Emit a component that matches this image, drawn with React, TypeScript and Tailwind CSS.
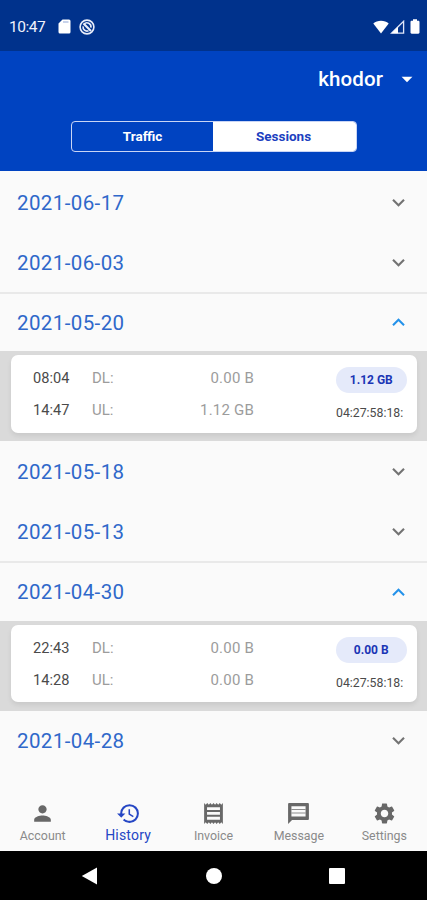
import { useState } from 'react';
import {
  MdArrowDropDown,
  MdHistory,
  MdKeyboardArrowDown,
  MdKeyboardArrowUp,
  MdPerson,
  MdSettings,
} from 'react-icons/md';

interface Session {
  start: string;
  end: string;
  download: string;
  upload: string;
  total: string;
  mac: string;
}

interface Day {
  date: string;
  session?: Session;
}

interface IconProps {
  size: number;
  className?: string;
}

const days: Day[] = [
  { date: '2021-06-17' },
  { date: '2021-06-03' },
  {
    date: '2021-05-20',
    session: { start: '08:04', end: '14:47', download: '0.00 B', upload: '1.12 GB', total: '1.12 GB', mac: '04:27:58:18:' },
  },
  { date: '2021-05-18' },
  { date: '2021-05-13' },
  {
    date: '2021-04-30',
    session: { start: '22:43', end: '14:28', download: '0.00 B', upload: '0.00 B', total: '0.00 B', mac: '04:27:58:18:' },
  },
  { date: '2021-04-28' },
];

// Speech bubble with a thick frame and two thin bars inside
function MessageIcon({ size, className }: IconProps) {
  return (
    <svg width={size} height={size} viewBox="0 0 24 24" fill="currentColor" className={className}>
      <path
        fillRule="evenodd"
        d="M3.200 1.800H20.800C21.500 1.800 22 2.300 22 3V17c0 .7-.5 1.200-1.200 1.200H5.800L2 22V3c0-.7.500-1.200 1.200-1.200zM5.200 5v9.800h13.600V5z"
      />
      <path d="M5.200 7.700h13.600v1H5.200zM5.200 11.100h13.600v1H5.200z" opacity="0.75" />
    </svg>
  );
}

// Paper slip with serrated top and bottom edges
function InvoiceIcon({ size, className }: IconProps) {
  return (
    <svg width={size} height={size} viewBox="0 0 24 24" fill="currentColor" className={className}>
      <path
        fillRule="evenodd"
        d="M3 22l1.500-1.500L6 22l1.500-1.500L9 22l1.500-1.500L12 22l1.500-1.500L15 22l1.500-1.500L18 22l1.500-1.500L21 22V2l-1.500 1.500L18 2l-1.500 1.500L15 2l-1.500 1.500L12 2l-1.500 1.500L9 2 7.500 3.500 6 2 4.500 3.500 3 2zM5.800 6v2.700h12.400V6zM5.800 10.600v2.700h12.400v-2.700zM5.800 15.200v2.700h12.400v-2.700z"
      />
    </svg>
  );
}

const navItems = [
  { label: 'Account', icon: MdPerson },
  { label: 'History', icon: MdHistory },
  { label: 'Invoice', icon: InvoiceIcon },
  { label: 'Message', icon: MessageIcon },
  { label: 'Settings', icon: MdSettings },
];

function StatusBar() {
  return (
    <div className="flex h-[51px] shrink-0 items-center bg-[#00328c] pl-[9px] pr-[7px] pt-[2px] text-white">
      <span className="w-[49px] pt-[2px] text-[15.500px] leading-none tracking-[-0.500px] text-[#f0f3fc]">10:47</span>
      <svg width="13" height="15" viewBox="0 0 13 15" className="mr-[8px]">
        <path d="M4.5 0.5H11a1.5 1.5 0 0 1 1.5 1.5v11a1.5 1.5 0 0 1-1.5 1.5H2A1.5 1.5 0 0 1 .5 13V4.5z" fill="#fff" />
        <path d="M5 3h5.500" stroke="#8fa5d6" strokeWidth="1" />
      </svg>
      <svg width="16" height="16" viewBox="0 0 16 16" fill="none" stroke="#e8edfa">
        <circle cx="8" cy="8" r="6.900" strokeWidth="1.600" />
        <path d="M5 5.200A4 4 0 0 1 11.900 8.600M4.100 7.400A4 4 0 0 0 9.500 11.800" strokeWidth="1.600" />
        <path d="M4.500 4.500l7.500 7.500" strokeWidth="2.200" />
      </svg>
      <svg width="16" height="14" viewBox="0 0 16 14" className="ml-auto">
        <path d="M8 13.500L0.300 3.600C2.300 1.800 5 .8 8 .8s5.700 1 7.700 2.800z" fill="#fff" />
      </svg>
      <svg width="15" height="14" viewBox="0 0 15 14" className="ml-px">
        <path d="M13.600 1.300v11.900H1.500z" fill="none" stroke="#dfe6f8" strokeWidth="1.300" />
        <path d="M8 6.800v6.400H1.500z" fill="#fff" />
      </svg>
      <svg width="10" height="15" viewBox="0 0 10 15" className="ml-[5px]">
        <path d="M3 0.300h4v1.500h1.300c.7 0 1.200.5 1.200 1.200v10.500c0 .7-.5 1.200-1.200 1.200H1.700c-.7 0-1.200-.5-1.200-1.200V3c0-.7.5-1.200 1.200-1.200H3z" fill="#fff" />
      </svg>
    </div>
  );
}

function Header() {
  return (
    <header className="h-[120px] shrink-0 bg-[#0043c1] text-white">
      <div className="flex h-14 items-center justify-end pr-[7px]">
        <span className="pt-px text-[20.5px] font-medium leading-none tracking-[0.1px]">khodor</span>
        <MdArrowDropDown size={26} className="ml-[11px]" />
      </div>
      <div className="ml-[71px] mt-[14px] flex h-[31px] w-[286px] overflow-hidden rounded-[4px] border border-[#c9d5f5] text-[13.500px] font-bold">
        <button type="button" className="flex-1 pb-px">Traffic</button>
        <button type="button" className="flex-1 bg-white pb-px pr-[2px] text-[#1c3fc0]">Sessions</button>
      </div>
    </header>
  );
}

function SessionCard({ session }: { session: Session }) {
  return (
    <div className="h-[90px] bg-[#dadada] pl-[11px] pr-[10px] pt-[4px]">
      <div className="flex h-[77.500px] rounded-[7px] bg-white pr-[10.500px] shadow-[0_3px_5px_rgba(0,0,0,0.08)]">
        <div className="flex w-[81px] flex-col gap-[12px] pl-[22px] pt-[13px] text-[14.600px] leading-5 text-[#4a4a4a]">
          <span>{session.start}</span>
          <span>{session.end}</span>
        </div>
        <div className="flex w-[162px] flex-col gap-[12px] pt-[13px] text-[15px] leading-5 text-[#9c9c9c]">
          <div className="flex justify-between"><span>DL:</span><span className="tracking-[0.2px]">{session.download}</span></div>
          <div className="flex justify-between"><span>UL:</span><span className="tracking-[0.2px]">{session.upload}</span></div>
        </div>
        <div className="ml-auto flex w-[70.500px] flex-col pt-[12px]">
          <span className="flex h-[26px] items-center justify-center rounded-full bg-[#e5eafa] text-[12px] font-bold text-[#1a35b5]">
            {session.total}
          </span>
          <span className="mt-[10px] text-[12.300px] leading-5 text-[#4a4a4a]">{session.mac}</span>
        </div>
      </div>
    </div>
  );
}

function DayRow({ day, open, onToggle }: { day: Day; open: boolean; onToggle: () => void }) {
  return (
    <section>
      <button
        type="button"
        onClick={onToggle}
        aria-expanded={open}
        className={`flex w-full items-center justify-between pl-[17px] pr-[16px] ${open ? 'h-[59.400px] border-t-2 border-[#e9e9e9]' : 'h-[60px]'}`}
      >
        <span className={`text-[20.500px] leading-6 tracking-[0.4px] text-[#2f68ca] ${open ? '' : 'pt-px'}`}>{day.date}</span>
        {open ? (
          <MdKeyboardArrowUp size={25} className="text-[#2492ea]" />
        ) : (
          <MdKeyboardArrowDown size={25} className="text-[#737373]" />
        )}
      </button>
      {open && day.session && <SessionCard session={day.session} />}
    </section>
  );
}

function BottomNav() {
  return (
    <nav className="flex h-[56px] shrink-0 bg-[#fafafa]">
      {navItems.map(({ label, icon: Icon }) => {
        const active = label === 'History';
        return (
          <a
            key={label}
            href="#"
            className={`flex flex-1 flex-col items-center pt-[6px] leading-4 ${active ? 'text-[14px] tracking-[0.2px] text-[#2546c4]' : 'text-[12.400px] text-[#8a8a8a]'}`}
          >
            <Icon size={25} className={active ? '' : 'text-[#686868]'} />
            <span className={active ? 'mt-px' : 'mt-[2px]'}>{label}</span>
          </a>
        );
      })}
    </nav>
  );
}

export default function App() {
  const [openDays, setOpenDays] = useState<string[]>(['2021-05-20', '2021-04-30']);

  const toggle = (date: string) =>
    setOpenDays((prev) => (prev.includes(date) ? prev.filter((d) => d !== date) : [...prev, date]));

  return (
    <div className="flex h-[900px] w-[427px] flex-col overflow-hidden bg-[#fafafa] font-['Roboto',sans-serif]">
      <StatusBar />
      <Header />
      <main className="min-h-0 flex-1 overflow-hidden pt-px">
        {days.map((day) => (
          <DayRow key={day.date} day={day} open={openDays.includes(day.date)} onToggle={() => toggle(day.date)} />
        ))}
      </main>
      <BottomNav />
      {/* Android navigation keys */}
      <div className="flex h-[49px] shrink-0 items-center justify-between bg-black pl-[81px] pr-[82px]">
        <svg width="17" height="18" viewBox="0 0 17 18"><path d="M16 0.500v17L0.800 9z" fill="#fff" /></svg>
        <span className="size-4 rounded-full bg-white" />
        <span className="size-4 rounded-[1px] bg-white" />
      </div>
    </div>
  );
}
